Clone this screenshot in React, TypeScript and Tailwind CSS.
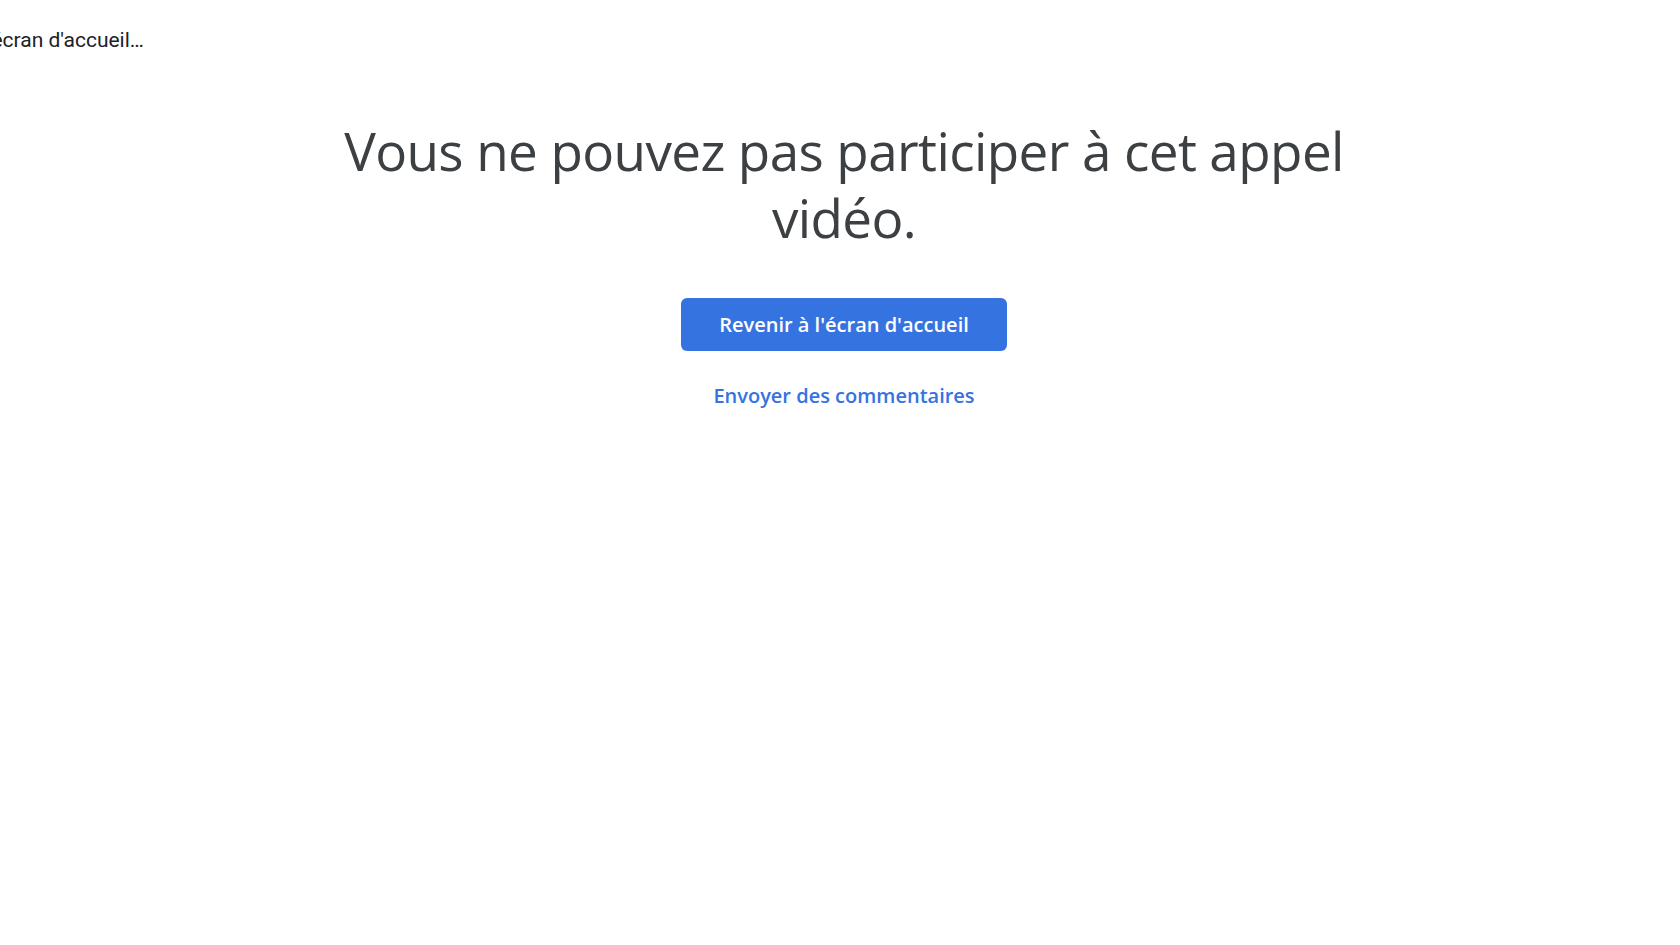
export default function App() {
  return (
    <div className="relative min-h-screen w-full overflow-hidden bg-white" style={{ fontFamily: '"Open Sans", Roboto, sans-serif' }}>
      <div className="absolute left-[-100px] top-[26px] text-[21px] leading-[28px] text-[#202124] whitespace-nowrap font-['Roboto',sans-serif]">
        Retour à l'écran d'accueil…
      </div>
      <main className="flex flex-col items-center pl-2 pt-[117px]">
        <h1 className="max-w-[1100px] text-center text-[53px] leading-[67px] font-normal text-[#3c4043] tracking-[-0.6px]">
          Vous ne pouvez pas participer à cet appel vidéo.
        </h1>
        <button className="mt-[47px] h-[53px] w-[326px] rounded-md bg-[#3573e1] text-[20px] font-semibold text-white">
          Revenir à l'écran d'accueil
        </button>
        <a href="#" className="mt-[30px] text-[20px] font-semibold text-[#3573e1]">
          Envoyer des commentaires
        </a>
      </main>
    </div>
  );
}
